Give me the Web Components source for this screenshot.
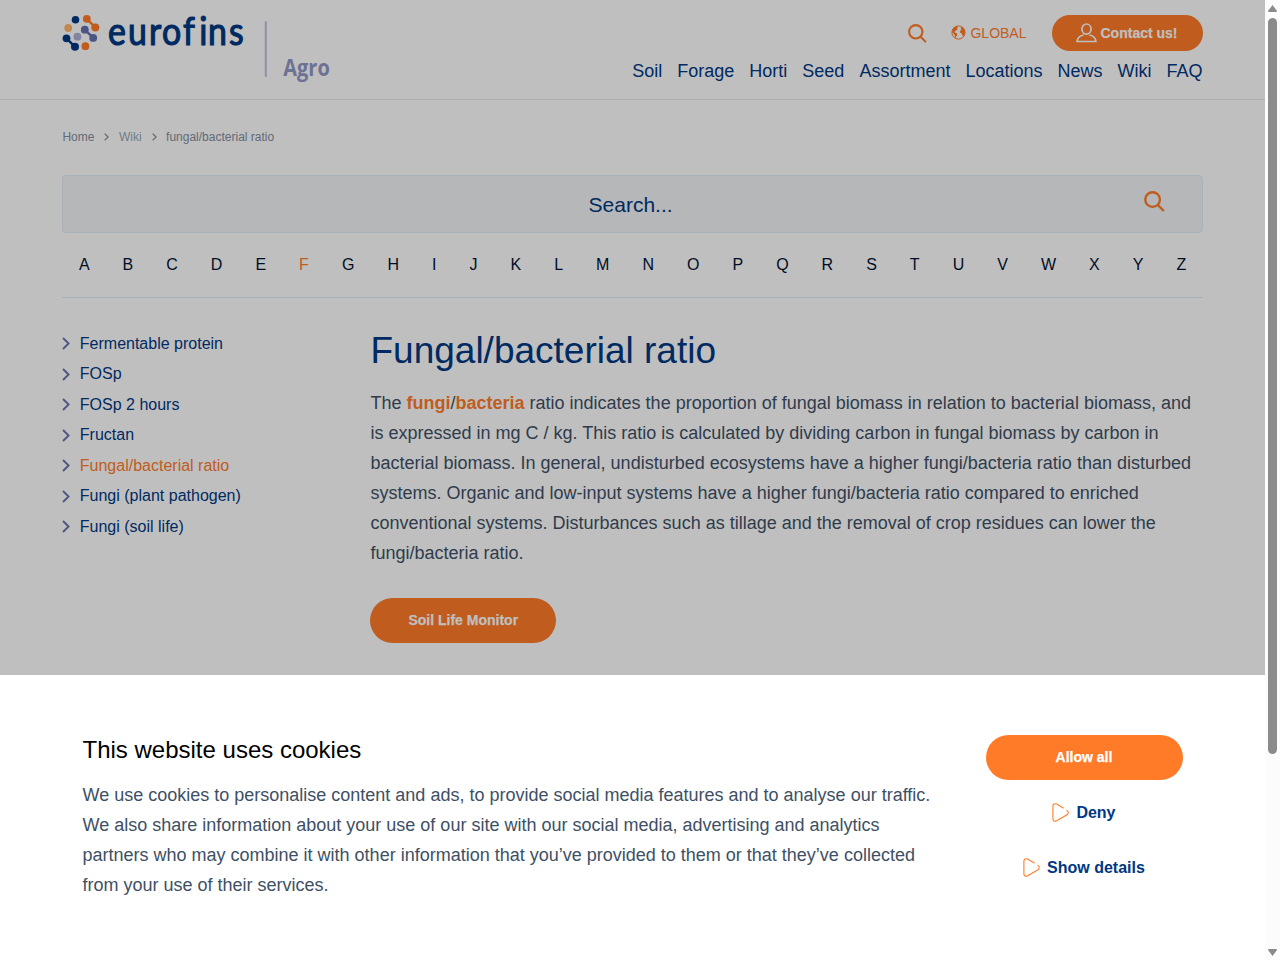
<!DOCTYPE html>
<html lang="en">
<head>
<meta charset="utf-8">
<title>Fungal/bacterial ratio</title>
<style>
html,body{margin:0;height:100%;overflow:hidden}
body{font-family:"Liberation Sans",Arial,sans-serif;--orange:#bf5c1e;--navy:#002a62;--line:#a8b0b6;--text:#2f3c4c;background:#bfbfbf}
</style>
</head>
<body>
<wiki-page></wiki-page>
<script>
const define = (name, html) => {
  const t = document.createElement('template');
  t.innerHTML = html;
  customElements.define(name, class extends HTMLElement {
    constructor() {
      super();
      this.attachShadow({mode: 'open'}).appendChild(t.content.cloneNode(true));
    }
  });
};

define('search-icon', `<style>:host{display:block;width:19px;height:19px;color:var(--orange)}svg{display:block;width:100%;height:100%}</style>
<svg viewBox="0 0 22 22" fill="none" stroke="currentColor" stroke-width="2.4"><circle cx="9" cy="9" r="7.7"/><path d="M14.3 14.5L20.8 21"/></svg>`);

define('chevron-icon', `<style>:host{display:block;width:8px;height:13px;color:#4c5582}svg{display:block;width:100%;height:100%}</style>
<svg viewBox="0 0 8 13" fill="none" stroke="currentColor" stroke-width="1.8"><path d="M1 1L6.6 6.5L1 12"/></svg>`);

define('play-icon', `<style>:host{display:block;width:17px;height:19px}svg{display:block}</style>
<svg width="17" height="19" viewBox="0 0 17 19" fill="none" stroke="#ff7b28" stroke-width="1.1" stroke-linecap="round"><path d="M11.2 5L4.6 1.1C2.6.1 .9 1 .9 3.2V15.8C.9 18 2.6 18.8 4.6 17.8L14.6 12C16.8 10.7 16.8 8.8 14.9 7.4"/></svg>`);

define('brand-logo', `<style>:host{display:block;width:280px;height:80px}svg{display:block;overflow:visible}.name{font-variant-ligatures:none}</style>
<svg width="280" height="80" viewBox="62 8 280 80">
<g fill="#002a62" stroke="#002a62"><circle cx="75.5" cy="19.8" r="3.8" stroke="none"/><circle cx="66.5" cy="38.3" r="3.9" stroke="none"/><circle cx="75" cy="46.8" r="4" stroke="none"/><path d="M66.5 38.3L75 46.8" stroke-width="2.4"/></g>
<g fill="#bf5c1e"><circle cx="86.8" cy="18.8" r="3.9"/><circle cx="95.3" cy="27.5" r="4"/><circle cx="85.4" cy="46.2" r="3.9"/><path d="M86.8 18.8L95.3 27.5" stroke="#bf5c1e" stroke-width="2.4"/></g>
<circle cx="68.2" cy="28" r="3.9" fill="#bf8951"/>
<circle cx="77.4" cy="36.7" r="3.9" fill="#81859f"/>
<g fill="#4c5582"><circle cx="84.8" cy="29.7" r="3.9"/><circle cx="93.2" cy="37.9" r="3.9"/><path d="M84.8 29.7L93.2 37.9" stroke="#4c5582" stroke-width="2.4"/></g>
<text class="name" transform="translate(108 45.1) scale(.88 1)" y="0" x="0 22.8 46.6 61.4 85.2 103.8 113.6 137.4" font-family="Lato,sans-serif" font-size="38.5" fill="#002a62" stroke="#002a62" stroke-width="1.2">eurofins</text>
<rect x="264.8" y="21.3" width="2" height="55.5" fill="#8d91a8"/>
<text x="283.3" y="76.2" font-family="Open Sans,sans-serif" font-size="23.5" font-weight="700" fill="#6d7294" textLength="46.5" lengthAdjust="spacingAndGlyphs">Agro</text>
</svg>`);

define('pill-button', `<style>:host{display:flex;align-items:center;justify-content:center;box-sizing:border-box;height:45px;border-radius:23px;background:var(--pill,var(--orange));color:var(--pill-text,#bfbfbf);font-size:14px;font-weight:700;white-space:nowrap;-webkit-text-stroke:.25px;padding-bottom:1px}</style><slot></slot>`);

define('site-header', `<style>
:host{display:flex;justify-content:space-between;box-sizing:border-box;height:100px;padding:8px 62.5px 0 62px;border-bottom:1px solid var(--line)}
.right{display:flex;flex-direction:column;align-items:flex-end}
.top{display:flex;align-items:center;height:36px;margin-top:7px}
.global{display:flex;align-items:center;gap:4.5px;margin:0 25px 0 23.5px;font-size:14px;color:var(--orange)}
.global svg{margin-top:-2px}
pill-button{width:151px;height:36px;gap:4px;padding-bottom:0}
pill-button svg{margin-left:-1px}
nav{display:flex;gap:15px;margin-top:9px;font-size:18px;line-height:22px;color:var(--navy);white-space:nowrap}
</style>
<brand-logo></brand-logo>
<div class="right"><div class="top"><search-icon></search-icon>
<div class="global"><svg width="15" height="15" viewBox="0 0 15 15"><circle cx="7.5" cy="7.5" r="6.6" fill="none" stroke="#bf5c1e"/><path fill="#bf5c1e" d="M1.2 5L2.8 2.5L5.8 1.2L7.3 2.2L6 3L6.8 4.4L5 5.2L4.4 6.6L3.2 6.6L4.2 7.7L6.3 8.6L6.2 10.2L5.2 11.5L4.9 13.2L4 12L3.5 9.6L1.3 7.6Z M10.2 2L12.4 3L14 6L13.8 8.6L12.4 10.9L11.4 10.8L11 8.5L9.1 7.8L8.9 6L10.5 5L9.6 3.9Z"/></svg><span>GLOBAL</span></div>
<pill-button><svg width="21" height="20" viewBox="0 0 21 20" fill="none" stroke="#bfbfbf" stroke-width="1.7"><ellipse cx="10.5" cy="6.1" rx="4.6" ry="5.1"/><path d="M7.6 12C3.5 12.8 1.4 14.8 1.1 18.5H19.9C19.6 14.8 17.5 12.8 13.4 12"/></svg><span>Contact us!</span></pill-button></div>
<nav><span>Soil</span><span>Forage</span><span>Horti</span><span>Seed</span><span>Assortment</span><span>Locations</span><span>News</span><span>Wiki</span><span>FAQ</span></nav></div>`);

define('bread-crumbs', `<style>:host{display:flex;align-items:center;height:16px;font-size:12px;color:#626a76}chevron-icon{width:5px;height:8px;margin:0 9.5px 0 10px;color:#59616d}</style>
<span>Home</span><chevron-icon></chevron-icon><span style="color:#737b87">Wiki</span><chevron-icon></chevron-icon><span>fungal/bacterial ratio</span>`);

define('search-box', `<style>:host{display:grid;grid-template-columns:1fr 21px;align-items:center;box-sizing:border-box;height:58px;border:1px solid #a9b2b7;border-radius:4px;background:#b5b7b9;padding:0 37px 0 54px;color:var(--navy);font-size:21px;text-align:center}
span{margin-top:1px}search-icon{width:21px;height:21px;margin-top:-5px}</style><span>Search...</span><search-icon></search-icon>`);

define('letter-index', `<style>:host{display:flex;justify-content:space-between;align-items:center;box-sizing:border-box;height:65px;padding:0 16.5px 1px 16.5px;border-bottom:1px solid var(--line);font-size:16px;color:#000e26}.on{color:var(--orange)}</style>`
 + [...'ABCDEFGHIJKLMNOPQRSTUVWXYZ'].map(l => `<span${l==='F'?' class="on"':''}>${l}</span>`).join(''));

define('term-item', `<style>:host{display:flex;align-items:center;gap:10px;height:30.5px;font-size:16px;color:var(--navy)}:host([active]){color:var(--orange)}</style><chevron-icon></chevron-icon><span><slot></slot></span>`);

define('wiki-article', `<style>:host{display:block;color:var(--text)}h1{margin:0;padding-top:1px;font-size:37px;line-height:44px;font-weight:400;color:var(--navy)}p{margin:15px 0 30px;font-size:18px;line-height:30px;white-space:nowrap}b{color:var(--orange)}pill-button{width:185.6px;height:44.6px}</style>
<h1>Fungal/bacterial ratio</h1>
<p>The <b>fungi</b>/<b>bacteria</b> ratio indicates the proportion of fungal biomass in relation to bacterial biomass, and<br>is expressed in mg C / kg. This ratio is calculated by dividing carbon in fungal biomass by carbon in<br>bacterial biomass. In general, undisturbed ecosystems have a higher fungi/bacteria ratio than disturbed<br>systems. Organic and low-input systems have a higher fungi/bacteria ratio compared to enriched<br>conventional systems. Disturbances such as tillage and the removal of crop residues can lower the<br>fungi/bacteria ratio.</p>
<pill-button>Soil Life Monitor</pill-button>`);

define('cookie-panel', `<style>:host{display:flex;justify-content:space-between;box-sizing:border-box;height:285px;padding:60px 82.5px 0 82.5px;background:#fff;--pill:#ff7b28;--pill-text:#fff}
h2{margin:0;font-size:24px;line-height:30px;font-weight:400;color:#000}p{margin:15px 0 0;font-size:18px;line-height:30px;color:#3e5065;white-space:nowrap}
.actions{width:197px;display:flex;flex-direction:column;gap:10px}.link{display:flex;height:45px;align-items:center;justify-content:center;gap:7.5px;font-size:16px;font-weight:700;color:#003883;margin-left:-.6px}</style>
<div><h2>This website uses cookies</h2><p>We use cookies to personalise content and ads, to provide social media features and to analyse our traffic.<br>We also share information about your use of our site with our social media, advertising and analytics<br>partners who may combine it with other information that you’ve provided to them or that they’ve collected<br>from your use of their services.</p></div>
<div class="actions"><pill-button>Allow all</pill-button><div class="link"><play-icon></play-icon><span>Deny</span></div><div class="link"><play-icon></play-icon><span>Show details</span></div></div>`);

define('scroll-bar', `<style>:host{display:flex;flex-direction:column;align-items:center;background:#fcfcfc;box-sizing:border-box;padding:5px 0 4px}svg{display:block;fill:#8b8b8b}.thumb{width:9px;height:736px;margin-top:6px;border-radius:5px;background:#8b8b8b}.down{margin-top:auto}</style>
<svg width="9" height="7"><path d="M4.5 0L9 6Q9 7 8 7H1Q0 7 0 6Z"/></svg><div class="thumb"></div><svg class="down" width="9" height="8"><path d="M4.5 8L9 2Q9 1 8 1H1Q0 1 0 2Z"/></svg>`);

define('wiki-page', `<style>:host{display:grid;grid-template-columns:1265px 15px;height:960px;overflow:hidden}
.view{display:grid;grid-template-rows:675px 285px}
main{padding:29px 62.2px 0 62.4px}search-box{margin-top:30.4px}
.cols{display:grid;grid-template-columns:308.1px 1fr;padding-top:30px}.terms{margin-left:-.6px}</style>
<div class="view"><div><site-header></site-header><main><bread-crumbs></bread-crumbs><search-box></search-box><letter-index></letter-index>
<div class="cols"><div class="terms"><term-item>Fermentable protein</term-item><term-item>FOSp</term-item><term-item>FOSp 2 hours</term-item><term-item>Fructan</term-item><term-item active>Fungal/bacterial ratio</term-item><term-item>Fungi (plant pathogen)</term-item><term-item>Fungi (soil life)</term-item></div><wiki-article></wiki-article></div></main></div>
<cookie-panel></cookie-panel></div><scroll-bar></scroll-bar>`);
</script>
</body>
</html>
